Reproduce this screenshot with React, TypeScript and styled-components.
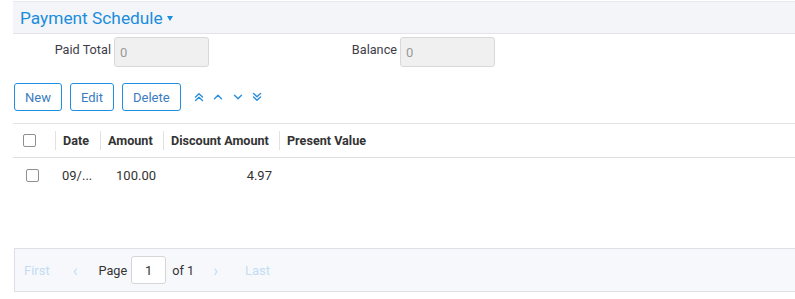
import styled, { createGlobalStyle } from 'styled-components';

type Row = {
    date: string;
    amount: string;
    discount: string;
    present: string;
}

const rows: Row[] = [
    { date: '09/...', amount: '100.00', discount: '4.97', present: '' },
];

const GlobalStyle = createGlobalStyle`
    body {
        margin: 0;
        background: #fff;
        font-family: Roboto, "Liberation Sans", Arial, sans-serif;
        color: #333;
    }
`;

const ChevronIcon = ({ double, down }: { double?: boolean; down?: boolean }) => (
    <svg width="10" height="10" viewBox="0 0 10 10" fill="none" stroke="#2b8fdb" strokeWidth="1.4" strokeLinecap="round" strokeLinejoin="round" style={{ transform: down ? 'rotate(180deg)' : undefined }}>
        {double ? (
            <>
                <path d="M1.5 5 L5 1.8 L8.5 5" />
                <path d="M1.5 8.5 L5 5.3 L8.5 8.5" />
            </>
        ) : (
            <path d="M1.5 6.8 L5 3.3 L8.5 6.8" />
        )}
    </svg>
);

export default function App() {
    return (
        <Page>
            <GlobalStyle />
            <Header>
                <Title>Payment Schedule</Title>
                <Caret />
            </Header>
            <Fields>
                <Field>
                    <FieldLabel $width={101}>Paid Total</FieldLabel>
                    <FieldInput value="0" readOnly />
                </Field>
                <Field>
                    <FieldLabel $width={191}>Balance</FieldLabel>
                    <FieldInput value="0" readOnly />
                </Field>
            </Fields>
            <Toolbar>
                <Button>New</Button>
                <Button>Edit</Button>
                <Button>Delete</Button>
                <Arrows>
                    <ArrowButton><ChevronIcon double /></ArrowButton>
                    <ArrowButton><ChevronIcon /></ArrowButton>
                    <ArrowButton><ChevronIcon down /></ArrowButton>
                    <ArrowButton><ChevronIcon double down /></ArrowButton>
                </Arrows>
            </Toolbar>
            <Table>
                <HeadRow>
                    <CheckCell $pad={10}><Box /></CheckCell>
                    <HeadCell $width={45}>Date</HeadCell>
                    <HeadCell $width={63}>Amount</HeadCell>
                    <HeadCell $width={116}>Discount Amount</HeadCell>
                    <HeadCell $width={140}>Present Value</HeadCell>
                </HeadRow>
                {rows.map((row, index) => (
                    <BodyRow key={index}>
                        <CheckCell $pad={13}><Box /></CheckCell>
                        <Cell $width={45}>{row.date}</Cell>
                        <Cell $width={63} $right>{row.amount}</Cell>
                        <Cell $width={116} $right>{row.discount}</Cell>
                        <Cell $width={140} $right>{row.present}</Cell>
                    </BodyRow>
                ))}
            </Table>
            <Pager>
                <PagerLink $gap={23}>First</PagerLink>
                <PagerArrow $gap={21}>‹</PagerArrow>
                <PagerText $gap={4}>Page</PagerText>
                <PageInput value="1" readOnly />
                <PagerText $gap={19}>of 1</PagerText>
                <PagerArrow $gap={27}>›</PagerArrow>
                <PagerLink $gap={0}>Last</PagerLink>
            </Pager>
        </Page>
    );
}

const Page = styled.div`
    padding: 1px 0 0 13px;
`;

const Header = styled.div`
    height: 31px;
    display: flex;
    align-items: center;
    padding-left: 7px;
    background: #f4f5f9;
    border-top: 1px solid #e6e8ec;
    border-bottom: 1px solid #e2e4e8;
`;

const Title = styled.div`
    font-size: 17.3px;
    color: #1b8ddc;
    line-height: 20px;
`;

const Caret = styled.span`
    margin-left: 4px;
    margin-top: 1px;
    width: 0;
    height: 0;
    border-left: 3.5px solid transparent;
    border-right: 3.5px solid transparent;
    border-top: 5px solid #1b8ddc;
`;

const Fields = styled.div`
    display: flex;
    margin-top: 3px;
`;

const Field = styled.div`
    display: flex;
    align-items: flex-start;
`;

const FieldLabel = styled.label<{ $width: number }>`
    width: ${p => p.$width}px;
    padding-top: 5px;
    padding-right: 3px;
    box-sizing: border-box;
    text-align: right;
    font-size: 12.7px;
    line-height: 16px;
    color: #3d3d4a;
`;

const FieldInput = styled.input`
    width: 95px;
    height: 30px;
    box-sizing: border-box;
    padding: 0 5px;
    background: #f0f0f0;
    border: 1px solid #d8d8d8;
    border-radius: 3px;
    font-family: inherit;
    font-size: 13px;
    color: #9a9a9a;
    outline: none;
`;

const Toolbar = styled.div`
    display: flex;
    align-items: center;
    gap: 8px;
    margin: 16px 0 0 1px;
`;

const Button = styled.button`
    height: 28px;
    padding: 0 10px;
    background: #fff;
    border: 1px solid #1f8fdf;
    border-radius: 3px;
    font-family: inherit;
    font-size: 13px;
    color: #3b7bbf;
    cursor: pointer;
`;

const Arrows = styled.div`
    display: flex;
    align-items: center;
    gap: 9.5px;
    margin-left: 5px;
`;

const ArrowButton = styled.span`
    display: flex;
    width: 10px;
    height: 10px;
`;

const Table = styled.div`
    margin-top: 12px;
    height: 124px;
    border-top: 1px solid #e4e4e4;
`;

const HeadRow = styled.div`
    display: flex;
    align-items: center;
    height: 33px;
    border-bottom: 1px solid #e0e0e0;
`;

const BodyRow = styled.div`
    display: flex;
    align-items: center;
    height: 35px;
`;

const CheckCell = styled.div<{ $pad: number }>`
    width: 42px;
    box-sizing: border-box;
    padding-left: ${p => p.$pad}px;
    display: flex;
`;

const Box = styled.span`
    width: 13px;
    height: 13px;
    box-sizing: border-box;
    border: 1px solid #8f8f8f;
    border-radius: 2px;
    background: #fff;
`;

const HeadCell = styled.div<{ $width: number }>`
    position: relative;
    width: ${p => p.$width}px;
    box-sizing: border-box;
    padding-left: 8px;
    font-size: 12.6px;
    font-weight: 700;
    color: #333;
    white-space: nowrap;

    &::before {
        content: '';
        position: absolute;
        left: 0;
        top: -2px;
        bottom: -2px;
        width: 1px;
        background: #e2e2e2;
    }
`;

const Cell = styled.div<{ $width: number; $right?: boolean }>`
    width: ${p => p.$width}px;
    box-sizing: border-box;
    padding: 0 7px;
    text-align: ${p => (p.$right ? 'right' : 'left')};
    font-size: 13px;
    color: #333;
    white-space: nowrap;
    overflow: hidden;
`;

const Pager = styled.div`
    display: flex;
    align-items: center;
    height: 42px;
    margin-left: 1px;
    padding-left: 9px;
    background: #f7f8fc;
    border: 1px solid #dcdfe6;
    border-right: none;
`;

const PagerLink = styled.span<{ $gap: number }>`
    font-size: 13px;
    color: #c3dcf2;
    margin-right: ${p => p.$gap}px;
`;

const PagerArrow = styled.span<{ $gap: number }>`
    font-size: 16px;
    color: #c3dcf2;
    margin-right: ${p => p.$gap}px;
`;

const PagerText = styled.span<{ $gap: number }>`
    font-size: 12.7px;
    color: #333;
    margin-right: ${p => p.$gap}px;
`;

const PageInput = styled.input`
    width: 35px;
    height: 28px;
    box-sizing: border-box;
    margin-right: 6px;
    text-align: center;
    background: #fff;
    border: 1px solid #d6d6d6;
    border-radius: 3px;
    font-family: inherit;
    font-size: 13px;
    color: #333;
    outline: none;
`;
